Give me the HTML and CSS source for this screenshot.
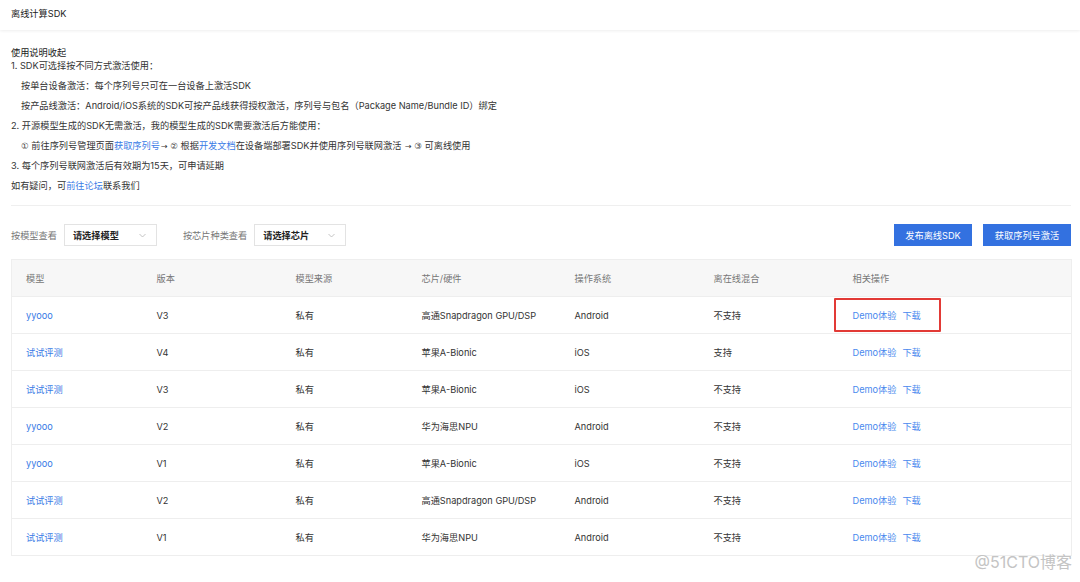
FILE: index.html
```html
<!DOCTYPE html>
<html lang="zh-CN">
<head>
<meta charset="utf-8">
<title>离线计算SDK</title>
<link rel="stylesheet" href="styles.css">
</head>
<body>
<header class="topbar">离线计算SDK</header>

<section class="intro">
  <div class="intro-title">使用说明收起</div>
  <div class="line first">1. SDK可选择按不同方式激活使用：</div>
  <div class="line sub">按单台设备激活：每个序列号只可在一台设备上激活SDK</div>
  <div class="line sub">按产品线激活：Android/iOS系统的SDK可按产品线获得授权激活，序列号与包名（Package Name/Bundle ID）绑定</div>
  <div class="line">2. 开源模型生成的SDK无需激活，我的模型生成的SDK需要激活后方能使用：</div>
  <div class="line sub"><span class="num">①</span> 前往序列号管理页面<a class="link">获取序列号</a><span class="arrow">→</span> <span class="num">②</span> 根据<a class="link">开发文档</a>在设备端部署SDK并使用序列号联网激活 <span class="arrow">→</span> <span class="num">③</span> 可离线使用</div>
  <div class="line">3. 每个序列号联网激活后有效期为15天，可申请延期</div>
  <div class="line">如有疑问，可<a class="link">前往论坛</a>联系我们</div>
</section>

<div class="divider"></div>

<div class="toolbar">
  <div class="filters">
    <span class="filter-label">按模型查看</span>
    <div class="select select-model"><span>请选择模型</span><svg class="chev" width="7" height="5" viewBox="0 0 7 5"><path d="M0.5 1 L3.5 4 L6.5 1" fill="none" stroke="#b5b5b5" stroke-width="0.8"/></svg></div>
    <span class="filter-label second">按芯片种类查看</span>
    <div class="select select-chip"><span>请选择芯片</span><svg class="chev" width="7" height="5" viewBox="0 0 7 5"><path d="M0.5 1 L3.5 4 L6.5 1" fill="none" stroke="#b5b5b5" stroke-width="0.8"/></svg></div>
  </div>
  <div class="buttons">
    <button class="btn btn-publish">发布离线SDK</button>
    <button class="btn btn-serial">获取序列号激活</button>
  </div>
</div>

<table class="grid">
  <colgroup>
    <col class="c1"><col class="c2"><col class="c3"><col class="c4"><col class="c5"><col class="c6"><col class="c7">
  </colgroup>
  <thead>
    <tr><th>模型</th><th>版本</th><th>模型来源</th><th>芯片/硬件</th><th>操作系统</th><th>离在线混合</th><th>相关操作</th></tr>
  </thead>
  <tbody>
    <tr><td><a class="link">yyooo</a></td><td>V3</td><td>私有</td><td>高通Snapdragon GPU/DSP</td><td>Android</td><td>不支持</td><td><span class="actions marked"><a class="link">Demo体验</a><a class="link">下载</a></span></td></tr>
    <tr><td><a class="link">试试评测</a></td><td>V4</td><td>私有</td><td>苹果A-Bionic</td><td>iOS</td><td>支持</td><td><span class="actions"><a class="link">Demo体验</a><a class="link">下载</a></span></td></tr>
    <tr><td><a class="link">试试评测</a></td><td>V3</td><td>私有</td><td>苹果A-Bionic</td><td>iOS</td><td>不支持</td><td><span class="actions"><a class="link">Demo体验</a><a class="link">下载</a></span></td></tr>
    <tr><td><a class="link">yyooo</a></td><td>V2</td><td>私有</td><td>华为海思NPU</td><td>Android</td><td>不支持</td><td><span class="actions"><a class="link">Demo体验</a><a class="link">下载</a></span></td></tr>
    <tr><td><a class="link">yyooo</a></td><td>V1</td><td>私有</td><td>苹果A-Bionic</td><td>iOS</td><td>不支持</td><td><span class="actions"><a class="link">Demo体验</a><a class="link">下载</a></span></td></tr>
    <tr><td><a class="link">试试评测</a></td><td>V2</td><td>私有</td><td>高通Snapdragon GPU/DSP</td><td>Android</td><td>不支持</td><td><span class="actions"><a class="link">Demo体验</a><a class="link">下载</a></span></td></tr>
    <tr><td><a class="link">试试评测</a></td><td>V1</td><td>私有</td><td>华为海思NPU</td><td>Android</td><td>不支持</td><td><span class="actions"><a class="link">Demo体验</a><a class="link">下载</a></span></td></tr>
  </tbody>
</table>

<div class="watermark">@51CTO博客</div>
</body>
</html>
```

FILE: styles.css
```css
* { box-sizing: border-box; }

html, body {
  margin: 0;
  padding: 0;
  background: #ffffff;
}

body {
  position: relative;
  width: 1080px;
  height: 582px;
  overflow: hidden;
  font-family: "Inter", "Noto Sans CJK SC", "Noto Sans", sans-serif;
  font-size: 9.2px;
  color: #333333;
}

.topbar {
  height: 30px;
  line-height: 27px;
  padding-left: 11px;
  color: #222222;
  box-shadow: 0 1px 3px rgba(0, 0, 0, 0.07);
}

.intro {
  padding: 16px 11px 0 11px;
}

.intro-title {
  line-height: 13px;
  color: #222222;
}

.line {
  height: 20px;
  line-height: 20px;
  overflow: visible;
}

.line.first {
  height: 13px;
  line-height: 13px;
}

.line.sub {
  padding-left: 10px;
}

.line.first + .line {
  margin-top: 4px;
}

.num {
  font-family: "DejaVu Sans", sans-serif;
  font-size: 8.6px;
  line-height: 0;
  color: #444444;
}

.arrow {
  font-family: "DejaVu Sans", sans-serif;
  font-size: 8px;
  line-height: 0;
  margin-left: 1px;
}

.link {
  color: #3a7be6;
  text-decoration: none;
}

.divider {
  margin: 9px 9px 0 11px;
  border-top: 1px solid #efefef;
}

.toolbar {
  display: flex;
  align-items: center;
  justify-content: space-between;
  margin-top: 18px;
  padding: 0 9px 0 11px;
  height: 22px;
}

.filters {
  display: flex;
  align-items: center;
}

.filter-label {
  color: #777777;
  margin-right: 7px;
}

.filter-label.second {
  margin-left: 26px;
}

.select {
  height: 22px;
  border: 1px solid #e3e3e3;
  display: flex;
  align-items: center;
  justify-content: space-between;
  padding: 0 10px 0 8px;
  color: #222222;
  font-weight: 600;
}

.select-model { width: 93px; }
.select-chip { width: 92px; }

.chev { display: block; }

.buttons {
  display: flex;
  gap: 11px;
}

.btn {
  height: 22px;
  border: none;
  background: #3371e0;
  color: #ffffff;
  font-family: inherit;
  font-size: 9.2px;
  padding: 0;
  white-space: nowrap;
  text-align: center;
  cursor: pointer;
}

.btn-publish { width: 78px; }
.btn-serial { width: 88px; }

.grid {
  margin: 13px 9px 0 11px;
  width: 1060px;
  border-collapse: collapse;
  table-layout: fixed;
  border: 1px solid #eeeeee;
}

.c1 { width: 131px; }
.c2 { width: 139px; }
.c3 { width: 126px; }
.c4 { width: 153px; }
.c5 { width: 139px; }
.c6 { width: 139px; }
.c7 { width: 233px; }

.grid th,
.grid td {
  height: 37px;
  padding: 0 0 0 14px;
  text-align: left;
  white-space: nowrap;
}

.grid th {
  background: #f7f7f7;
  font-weight: 400;
  color: #777777;
}

.grid td {
  border-top: 1px solid #eeeeee;
}

.actions {
  position: relative;
  display: inline-flex;
  gap: 6px;
}

.actions .link { color: #4a89ee; }

.actions.marked::after {
  content: "";
  position: absolute;
  left: -19px;
  right: -20px;
  top: -10px;
  bottom: -10px;
  border: 2px solid #e23a36;
  border-radius: 1px;
}

.watermark {
  position: absolute;
  right: 8px;
  bottom: 9px;
  font-size: 16px;
  color: #c4c4c4;
}
```
